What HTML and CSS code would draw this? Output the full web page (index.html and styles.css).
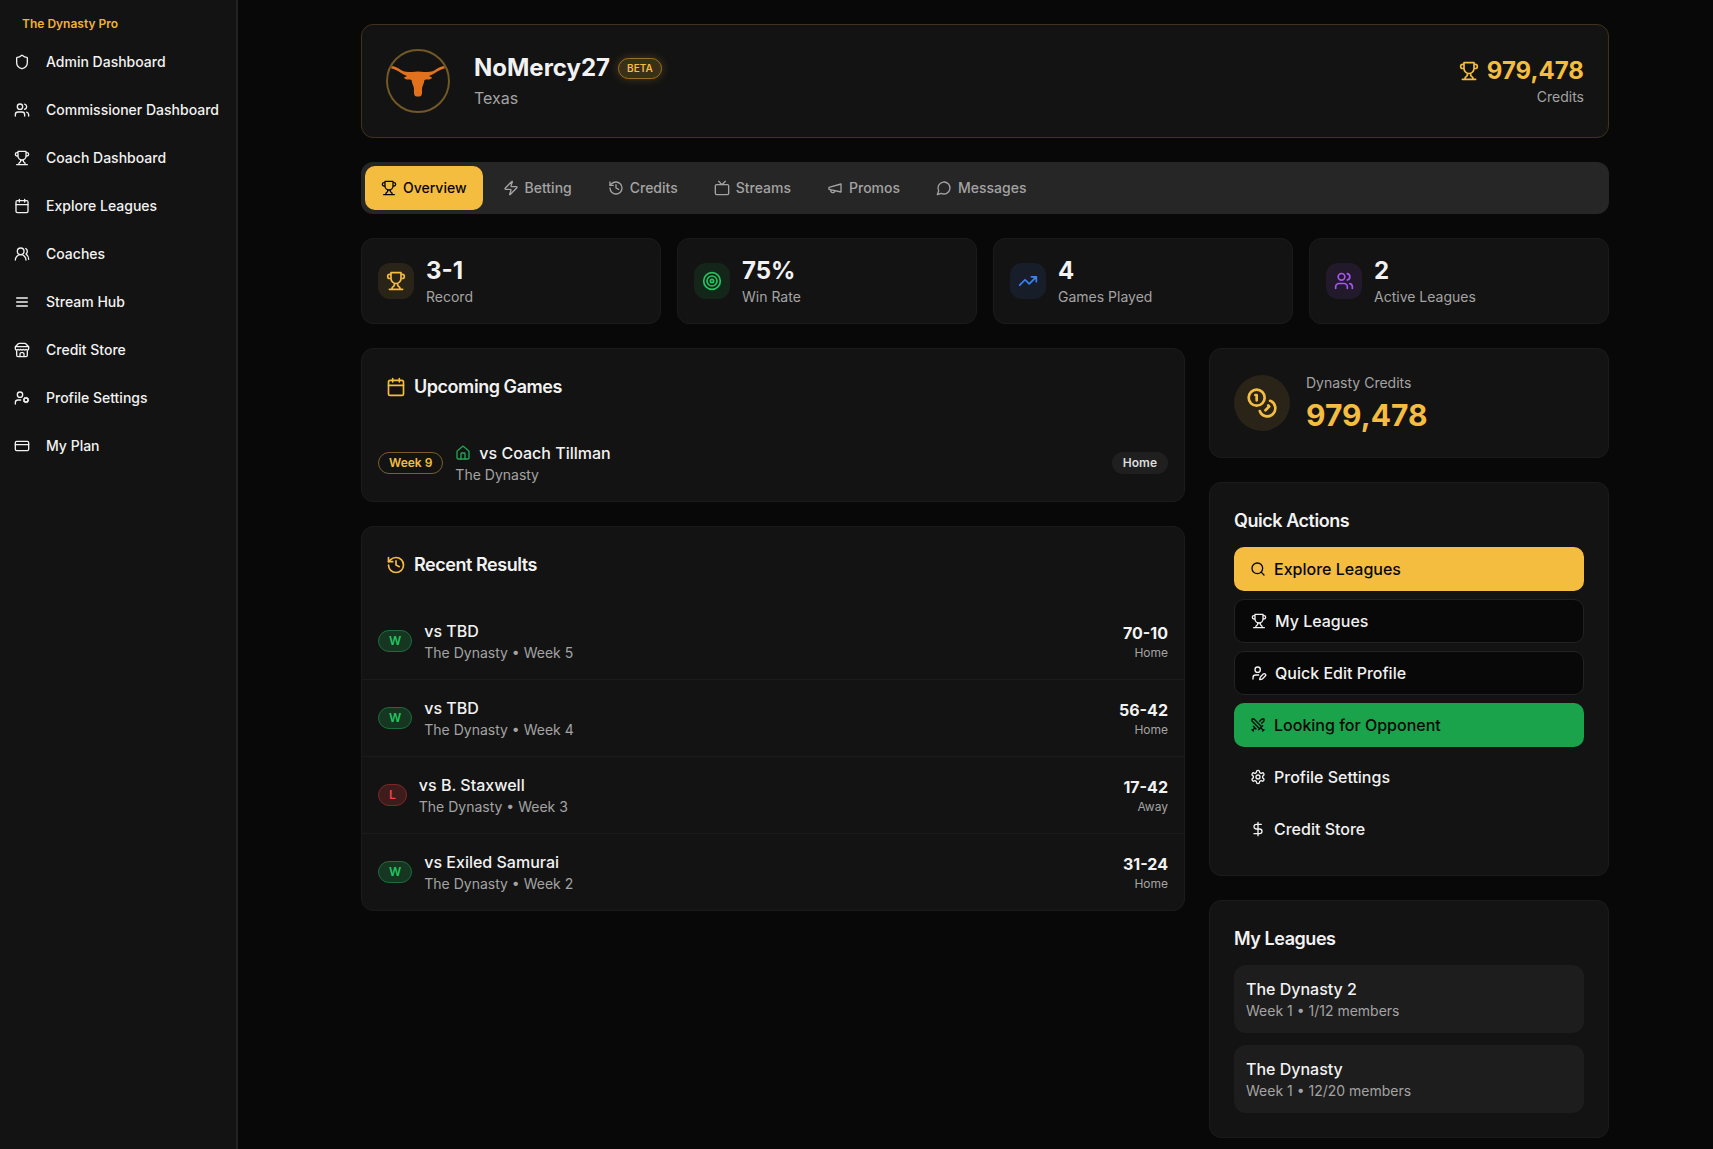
FILE: index.html
```html
<!DOCTYPE html>
<html lang="en">

<head>
    <meta charset="UTF-8">
    <meta name="viewport" content="width=device-width, initial-scale=1.0">
    <title>The Dynasty Pro</title>
    <link rel="stylesheet" href="styles.css">
</head>

<body>
    <!-- icon set -->
    <svg class="sprite" aria-hidden="true">
        <symbol id="shield" viewBox="0 0 24 24"><path d="M20 13c0 5-3.5 7.5-7.66 8.95a1 1 0 0 1-.67-.01C7.5 20.5 4 18 4 13V6a1 1 0 0 1 1-1c2 0 4.5-1.2 6.24-2.72a1.17 1.17 0 0 1 1.52 0C14.51 3.81 17 5 19 5a1 1 0 0 1 1 1z"/></symbol>
        <symbol id="users" viewBox="0 0 24 24"><path d="M16 21v-2a4 4 0 0 0-4-4H6a4 4 0 0 0-4 4v2"/><circle cx="9" cy="7" r="4"/><path d="M22 21v-2a4 4 0 0 0-3-3.87M16 3.13a4 4 0 0 1 0 7.75"/></symbol>
        <symbol id="trophy" viewBox="0 0 24 24"><path d="M6 9H4.5a2.5 2.5 0 0 1 0-5H6M18 9h1.5a2.5 2.5 0 0 0 0-5H18M4 22h16M10 14.66V17c0 .55-.47.98-.97 1.21C7.85 18.75 7 20.24 7 22M14 14.66V17c0 .55.47.98.97 1.21C16.15 18.75 17 20.24 17 22M18 2H6v7a6 6 0 0 0 12 0V2Z"/></symbol>
        <symbol id="calendar" viewBox="0 0 24 24"><path d="M8 2v4M16 2v4M3 10h18"/><rect width="18" height="18" x="3" y="4" rx="2"/></symbol>
        <symbol id="users-round" viewBox="0 0 24 24"><path d="M18 21a8 8 0 0 0-16 0"/><circle cx="10" cy="8" r="5"/><path d="M22 20c0-3.37-2-6.5-4-8a5 5 0 0 0-.45-8.3"/></symbol>
        <symbol id="menu" viewBox="0 0 24 24"><path d="M4 6h16M4 12h16M4 18h16"/></symbol>
        <symbol id="store" viewBox="0 0 24 24"><path d="m2 7 4.41-4.41A2 2 0 0 1 7.83 2h8.34a2 2 0 0 1 1.42.59L22 7M4 12v8a2 2 0 0 0 2 2h12a2 2 0 0 0 2-2v-8M15 22v-4a2 2 0 0 0-2-2h-2a2 2 0 0 0-2 2v4M2 7h20M22 7v3a2 2 0 0 1-2 2a2.7 2.7 0 0 1-1.59-.63.7.7 0 0 0-.82 0A2.7 2.7 0 0 1 16 12a2.7 2.7 0 0 1-1.59-.63.7.7 0 0 0-.82 0A2.7 2.7 0 0 1 12 12a2.7 2.7 0 0 1-1.59-.63.7.7 0 0 0-.82 0A2.7 2.7 0 0 1 8 12a2.7 2.7 0 0 1-1.59-.63.7.7 0 0 0-.82 0A2.7 2.7 0 0 1 4 12a2 2 0 0 1-2-2V7"/></symbol>
        <symbol id="user-cog" viewBox="0 0 24 24"><circle cx="18" cy="15" r="3"/><circle cx="9" cy="7" r="4"/><path d="M10 15H6a4 4 0 0 0-4 4v2M21.7 16.4l-.9-.3M15.2 13.9l-.9-.3M16.6 18.7l.3-.9M19.1 12.2l.3-.9M19.6 18.7l-.4-1M16.8 12.3l-.4-1M14.3 16.6l1-.4M20.7 13.8l1-.4"/></symbol>
        <symbol id="card" viewBox="0 0 24 24"><rect width="20" height="14" x="2" y="5" rx="2"/><path d="M2 10h20"/></symbol>
        <symbol id="zap" viewBox="0 0 24 24"><path d="M4 14a1 1 0 0 1-.78-1.63l9.9-10.2a.5.5 0 0 1 .86.46l-1.92 6.02A1 1 0 0 0 13 10h7a1 1 0 0 1 .78 1.63l-9.9 10.2a.5.5 0 0 1-.86-.46l1.92-6.02A1 1 0 0 0 11 14z"/></symbol>
        <symbol id="history" viewBox="0 0 24 24"><path d="M3 12a9 9 0 1 0 9-9 9.75 9.75 0 0 0-6.74 2.74L3 8"/><path d="M3 3v5h5M12 7v5l4 2"/></symbol>
        <symbol id="tv" viewBox="0 0 24 24"><rect width="20" height="15" x="2" y="7" rx="2"/><path d="m17 2-5 5-5-5"/></symbol>
        <symbol id="megaphone" viewBox="0 0 24 24"><path d="m3 11 18-5v12L3 14v-3zM11.6 16.8a3 3 0 1 1-5.8-1.6"/></symbol>
        <symbol id="message" viewBox="0 0 24 24"><path d="M7.9 20A9 9 0 1 0 4 16.1L2 22Z"/></symbol>
        <symbol id="target" viewBox="0 0 24 24"><circle cx="12" cy="12" r="10"/><circle cx="12" cy="12" r="6"/><circle cx="12" cy="12" r="2"/></symbol>
        <symbol id="trending" viewBox="0 0 24 24"><path d="m22 7-8.5 8.5-5-5L2 17M16 7h6v6"/></symbol>
        <symbol id="coins" viewBox="0 0 24 24"><circle cx="8" cy="8" r="6"/><path d="M18.09 10.37A6 6 0 1 1 10.34 18M7 6h1v4M16.71 13.88l.7.71-2.82 2.82"/></symbol>
        <symbol id="house" viewBox="0 0 24 24"><path d="M15 21v-8a1 1 0 0 0-1-1h-4a1 1 0 0 0-1 1v8"/><path d="M3 10a2 2 0 0 1 .71-1.53l7-6a2 2 0 0 1 2.58 0l7 6A2 2 0 0 1 21 10v9a2 2 0 0 1-2 2H5a2 2 0 0 1-2-2z"/></symbol>
        <symbol id="search" viewBox="0 0 24 24"><circle cx="11" cy="11" r="8"/><path d="m21 21-4.3-4.3"/></symbol>
        <symbol id="user-pen" viewBox="0 0 24 24"><path d="M11.5 15H7a4 4 0 0 0-4 4v2M21.38 16.63a1 1 0 0 0-3-3l-4.01 4.01a2 2 0 0 0-.51.85l-.84 2.87a.5.5 0 0 0 .62.62l2.87-.84a2 2 0 0 0 .85-.5z"/><circle cx="10" cy="7" r="4"/></symbol>
        <symbol id="swords" viewBox="0 0 24 24"><path d="M14.5 17.5 3 6V3h3l11.5 11.5zM13 19l6-6M16 16l4 4M19 21l2-2M14.5 6.5 18 3h3v3l-3.5 3.5M5 14l4 4M7 17l-3 3M3 19l2 2"/></symbol>
        <symbol id="settings" viewBox="0 0 24 24"><path d="M12.22 2h-.44a2 2 0 0 0-2 2v.18a2 2 0 0 1-1 1.73l-.43.25a2 2 0 0 1-2 0l-.15-.08a2 2 0 0 0-2.73.73l-.22.38a2 2 0 0 0 .73 2.73l.15.1a2 2 0 0 1 1 1.72v.51a2 2 0 0 1-1 1.74l-.15.09a2 2 0 0 0-.73 2.73l.22.38a2 2 0 0 0 2.73.73l.15-.08a2 2 0 0 1 2 0l.43.25a2 2 0 0 1 1 1.73V20a2 2 0 0 0 2 2h.44a2 2 0 0 0 2-2v-.18a2 2 0 0 1 1-1.73l.43-.25a2 2 0 0 1 2 0l.15.08a2 2 0 0 0 2.73-.73l.22-.39a2 2 0 0 0-.73-2.73l-.15-.08a2 2 0 0 1-1-1.74v-.5a2 2 0 0 1 1-1.74l.15-.09a2 2 0 0 0 .73-2.73l-.22-.38a2 2 0 0 0-2.73-.73l-.15.08a2 2 0 0 1-2 0l-.43-.25a2 2 0 0 1-1-1.73V4a2 2 0 0 0-2-2z"/><circle cx="12" cy="12" r="3"/></symbol>
        <symbol id="dollar" viewBox="0 0 24 24"><path d="M12 2v20M17 5H9.5a3.5 3.5 0 0 0 0 7h5a3.5 3.5 0 0 1 0 7H6"/></symbol>
    </svg>

    <div class="layout">
        <aside class="sidebar">
            <p class="brand">The Dynasty Pro</p>
            <nav class="menu">
                <a href="#"><svg class="icon"><use href="#shield"/></svg>Admin Dashboard</a>
                <a href="#"><svg class="icon"><use href="#users"/></svg>Commissioner Dashboard</a>
                <a href="#"><svg class="icon"><use href="#trophy"/></svg>Coach Dashboard</a>
                <a href="#"><svg class="icon"><use href="#calendar"/></svg>Explore Leagues</a>
                <a href="#"><svg class="icon"><use href="#users-round"/></svg>Coaches</a>
                <a href="#"><svg class="icon"><use href="#menu"/></svg>Stream Hub</a>
                <a href="#"><svg class="icon"><use href="#store"/></svg>Credit Store</a>
                <a href="#"><svg class="icon"><use href="#user-cog"/></svg>Profile Settings</a>
                <a href="#"><svg class="icon"><use href="#card"/></svg>My Plan</a>
            </nav>
        </aside>

        <main class="main">
            <header class="card profile">
                <div class="avatar">
                    <svg viewBox="0 0 60 60"><path d="M2 15C7 15 10 17 13 19C16 21 20 21 24 21Q30 20 36 21C40 21 44 21 47 19C50 17 53 15 58 15V17C53 18 50 20 47 22Q44 24 41 25L44 26.5Q43 29 38 28.5L36.5 29C36 33 34 35 34 38Q34.5 43 33 45Q30 46 27 45Q25.5 43 26 38C26 35 24 33 23.5 29L22 28.5Q17 29 16 26.5L19 25Q16 24 13 22C10 20 7 18 2 17Z"/></svg>
                </div>
                <div class="who">
                    <div class="name">
                        <h1>NoMercy27</h1>
                        <span class="beta">BETA</span>
                    </div>
                    <p>Texas</p>
                </div>
                <div class="balance">
                    <div class="amount"><svg class="icon icon-md"><use href="#trophy"/></svg>979,478</div>
                    <p>Credits</p>
                </div>
            </header>

            <div class="tabs">
                <button class="active"><svg class="icon"><use href="#trophy"/></svg>Overview</button>
                <button><svg class="icon"><use href="#zap"/></svg>Betting</button>
                <button><svg class="icon"><use href="#history"/></svg>Credits</button>
                <button><svg class="icon"><use href="#tv"/></svg>Streams</button>
                <button><svg class="icon"><use href="#megaphone"/></svg>Promos</button>
                <button><svg class="icon"><use href="#message"/></svg>Messages</button>
            </div>

            <section class="stats">
                <div class="card stat">
                    <span class="tile gold"><svg class="icon icon-md"><use href="#trophy"/></svg></span>
                    <div>
                        <strong>3-1</strong>
                        <p>Record</p>
                    </div>
                </div>
                <div class="card stat">
                    <span class="tile green"><svg class="icon icon-md"><use href="#target"/></svg></span>
                    <div>
                        <strong>75%</strong>
                        <p>Win Rate</p>
                    </div>
                </div>
                <div class="card stat">
                    <span class="tile blue"><svg class="icon icon-md"><use href="#trending"/></svg></span>
                    <div>
                        <strong>4</strong>
                        <p>Games Played</p>
                    </div>
                </div>
                <div class="card stat">
                    <span class="tile purple"><svg class="icon icon-md"><use href="#users"/></svg></span>
                    <div>
                        <strong>2</strong>
                        <p>Active Leagues</p>
                    </div>
                </div>
            </section>

            <div class="columns">
                <div class="column wide">
                    <section class="card">
                        <h2 class="card-title"><svg class="icon icon-md"><use href="#calendar"/></svg>Upcoming Games</h2>
                        <div class="game">
                            <span class="badge week">Week 9</span>
                            <div class="info">
                                <h3><svg class="icon home-icon"><use href="#house"/></svg>vs Coach Tillman</h3>
                                <p>The Dynasty</p>
                            </div>
                            <span class="badge venue">Home</span>
                        </div>
                    </section>

                    <section class="card">
                        <h2 class="card-title"><svg class="icon icon-md"><use href="#history"/></svg>Recent Results</h2>
                        <div class="game">
                            <span class="badge win">W</span>
                            <div class="info">
                                <h3>vs TBD</h3>
                                <p>The Dynasty • Week 5</p>
                            </div>
                            <div class="score">
                                <strong>70-10</strong>
                                <p>Home</p>
                            </div>
                        </div>
                        <div class="game">
                            <span class="badge win">W</span>
                            <div class="info">
                                <h3>vs TBD</h3>
                                <p>The Dynasty • Week 4</p>
                            </div>
                            <div class="score">
                                <strong>56-42</strong>
                                <p>Home</p>
                            </div>
                        </div>
                        <div class="game">
                            <span class="badge loss">L</span>
                            <div class="info">
                                <h3>vs B. Staxwell</h3>
                                <p>The Dynasty • Week 3</p>
                            </div>
                            <div class="score">
                                <strong>17-42</strong>
                                <p>Away</p>
                            </div>
                        </div>
                        <div class="game">
                            <span class="badge win">W</span>
                            <div class="info">
                                <h3>vs Exiled Samurai</h3>
                                <p>The Dynasty • Week 2</p>
                            </div>
                            <div class="score">
                                <strong>31-24</strong>
                                <p>Home</p>
                            </div>
                        </div>
                    </section>
                </div>

                <div class="column">
                    <section class="card credits">
                        <span class="coin gold"><svg class="icon icon-lg"><use href="#coins"/></svg></span>
                        <div>
                            <p>Dynasty Credits</p>
                            <strong>979,478</strong>
                        </div>
                    </section>

                    <section class="card panel">
                        <h2>Quick Actions</h2>
                        <div class="actions">
                            <a href="#" class="action primary"><svg class="icon"><use href="#search"/></svg>Explore Leagues</a>
                            <a href="#" class="action outline"><svg class="icon"><use href="#trophy"/></svg>My Leagues</a>
                            <button class="action outline"><svg class="icon"><use href="#user-pen"/></svg>Quick Edit Profile</button>
                            <button class="action success"><svg class="icon"><use href="#swords"/></svg>Looking for Opponent</button>
                            <a href="#" class="action"><svg class="icon"><use href="#settings"/></svg>Profile Settings</a>
                            <a href="#" class="action"><svg class="icon"><use href="#dollar"/></svg>Credit Store</a>
                        </div>
                    </section>

                    <section class="card panel">
                        <h2>My Leagues</h2>
                        <div class="leagues">
                            <a href="#" class="league">
                                <h3>The Dynasty 2</h3>
                                <p>Week 1 • 1/12 members</p>
                            </a>
                            <a href="#" class="league">
                                <h3>The Dynasty</h3>
                                <p>Week 1 • 12/20 members</p>
                            </a>
                        </div>
                    </section>
                </div>
            </div>
        </main>
    </div>
</body>

</html>
```
FILE: styles.css
```css
* {
    box-sizing: border-box;
    margin: 0;
    padding: 0;
}

body {
    background-color: #080808;
    color: #f2f2f2;
    font-family: Inter, sans-serif;
    font-size: 16px;
    line-height: 24px;
}

a {
    color: inherit;
    text-decoration: none;
}

button {
    border: none;
    font: inherit;
    cursor: pointer;
}

p {
    color: #a3a3a3;
    font-size: 14px;
    line-height: 20px;
}

.sprite {
    display: none;
}

.icon {
    width: 16px;
    height: 16px;
    flex-shrink: 0;
    fill: none;
    stroke: currentColor;
    stroke-width: 2;
    stroke-linecap: round;
    stroke-linejoin: round;
}

.icon-md {
    width: 20px;
    height: 20px;
}

.icon-lg {
    width: 32px;
    height: 32px;
}

.layout {
    display: grid;
    grid-template-columns: 257px 1fr;
    min-height: 100vh;
}

/* sidebar */
.sidebar {
    width: 238px;
    padding-top: 16px;
    background-color: #131313;
    border-right: 2px solid #222222;
}

.brand {
    padding-left: 22px;
    color: #f0b232;
    font-size: 12px;
    line-height: 16px;
    font-weight: 600;
}

.menu {
    display: flex;
    flex-direction: column;
    margin-top: 6px;
}

.menu a {
    display: flex;
    align-items: center;
    gap: 16px;
    height: 48px;
    padding-left: 14px;
    font-size: 14px;
    font-weight: 500;
    white-space: nowrap;
}

/* main */
.main {
    display: flex;
    flex-direction: column;
    gap: 24px;
    width: 100%;
    max-width: 1280px;
    margin: 0 auto;
    padding: 24px 16px 8px;
}

.card {
    background-color: #131313;
    border: 1px solid #1b1b1b;
    border-radius: 12px;
}

.profile {
    display: flex;
    align-items: center;
    gap: 24px;
    padding: 24px;
    border-color: #3f331a;
}

.avatar {
    width: 64px;
    height: 64px;
    border: 2px solid #715825;
    border-radius: 50%;
    overflow: hidden;
}

.avatar svg {
    display: block;
    fill: #e2711d;
}

.who {
    flex: 1;
}

.who p {
    margin-top: 2px;
    font-size: 16px;
    line-height: 24px;
}

.name {
    display: flex;
    align-items: center;
    gap: 8px;
}

.name h1 {
    font-size: 24px;
    line-height: 32px;
    font-weight: 700;
}

.beta {
    padding: 2px 8px;
    border: 1px solid #96732a;
    border-radius: 12px;
    background-color: #3b2f17;
    box-shadow: 0 0 10px rgba(245, 189, 64, 0.25);
    color: #f5bd40;
    font-size: 10px;
    line-height: 15px;
    font-weight: 600;
}

.balance {
    text-align: right;
}

.amount {
    display: flex;
    align-items: center;
    gap: 8px;
    color: #f5bd40;
    font-size: 24px;
    line-height: 32px;
    font-weight: 700;
}

/* tabs */
.tabs {
    display: flex;
    gap: 4px;
    padding: 4px;
    border-radius: 12px;
    background-color: #262626;
}

.tabs button {
    display: flex;
    align-items: center;
    gap: 6px;
    height: 44px;
    padding: 0 16px;
    border-radius: 10px;
    background: none;
    color: #a3a3a3;
    font-size: 14px;
    font-weight: 500;
}

.tabs .active {
    background-color: #f5bd40;
    color: #080808;
}

/* stats */
.stats {
    display: grid;
    grid-template-columns: repeat(4, 1fr);
    gap: 16px;
}

.stat {
    display: flex;
    align-items: center;
    gap: 12px;
    padding: 16px;
}

.stat strong {
    display: block;
    font-size: 24px;
    line-height: 32px;
}

.tile {
    display: flex;
    padding: 8px;
    border-radius: 12px;
}

.gold {
    background-color: #2a2318;
    color: #f5bd40;
}

.green {
    background-color: #14251a;
    color: #22c55e;
}

.blue {
    background-color: #171e2a;
    color: #3b82f6;
}

.purple {
    background-color: #221a2a;
    color: #a855f7;
}

/* columns */
.columns {
    display: grid;
    grid-template-columns: repeat(3, 1fr);
    gap: 24px;
    align-items: start;
}

.column {
    display: flex;
    flex-direction: column;
    gap: 24px;
}

.wide {
    grid-column: span 2;
}

h2 {
    font-size: 18px;
    line-height: 28px;
    font-weight: 600;
    letter-spacing: -0.025em;
}

h3 {
    font-size: 16px;
    line-height: 24px;
    font-weight: 500;
}

.card-title {
    display: flex;
    align-items: center;
    gap: 8px;
    padding: 24px;
}

.card-title .icon {
    color: #f5bd40;
}

.game {
    display: flex;
    align-items: center;
    gap: 12px;
    padding: 16px;
}

.game + .game {
    border-top: 1px solid #1b1b1b;
}

.info {
    flex: 1;
}

.info h3 {
    display: flex;
    align-items: center;
    gap: 8px;
}

.home-icon {
    color: #22a552;
}

.badge {
    padding: 2px 10px;
    border: 1px solid transparent;
    border-radius: 11px;
    font-size: 12px;
    line-height: 16px;
    font-weight: 600;
}

.week {
    border-color: #7a5f26;
    color: #f5bd40;
}

.venue {
    background-color: #1f1f1f;
    color: #dcdcdc;
}

.win {
    border-color: #1a6e3a;
    background-color: #163622;
    color: #22c55e;
}

.loss {
    border-color: #7c2727;
    background-color: #3f1c1c;
    color: #ef4444;
}

.score {
    text-align: right;
}

.score strong {
    display: block;
}

.score p {
    font-size: 12px;
    line-height: 16px;
}

/* right column */
.credits {
    display: flex;
    align-items: center;
    gap: 16px;
    padding: 24px;
}

.coin {
    display: flex;
    padding: 12px;
    border-radius: 50%;
}

.credits strong {
    display: block;
    margin-top: 4px;
    color: #f5bd40;
    font-size: 30px;
    line-height: 36px;
}

.panel {
    padding: 24px;
}

.actions,
.leagues {
    display: flex;
    flex-direction: column;
    gap: 8px;
    margin-top: 12px;
}

.leagues {
    gap: 12px;
}

.action {
    display: flex;
    align-items: center;
    gap: 8px;
    height: 44px;
    padding: 0 16px;
    border-radius: 10px;
    background: none;
    color: #f2f2f2;
    font-weight: 500;
}

.primary {
    background-color: #f5bd40;
    color: #080808;
}

.outline {
    border: 1px solid #222222;
    background-color: #080808;
}

.success {
    background-color: #1aa34a;
    color: #080808;
}

.league {
    padding: 12px;
    border-radius: 12px;
    background-color: #1d1d1d;
}
```
